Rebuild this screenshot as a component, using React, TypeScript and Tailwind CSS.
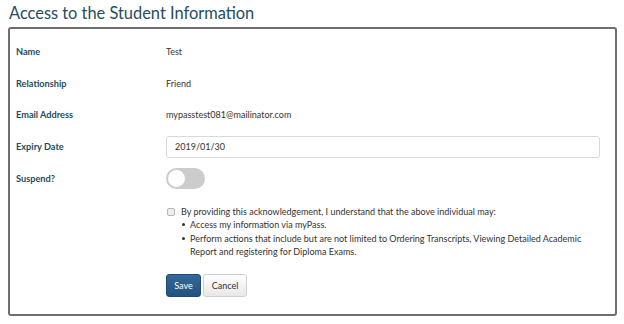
import React from "react";

const labelCls = "w-[150px] text-[9.2px] font-bold text-[#1f4c5e]";
const valCls = "text-[9px] text-[#333]";

function Bullet({ children }: { children: React.ReactNode }) {
  return (
    <div className="flex items-start">
      <div className="w-[9px] flex items-center h-[13.3px] pl-[1px]">
        <div className="w-[3px] h-[3px] rounded-full bg-[#333]" />
      </div>
      <div className="flex-1">{children}</div>
    </div>
  );
}

export default function App() {
  return (
    <div className="w-[624px] h-[324px] bg-white" style={{ fontFamily: "Lato, 'Open Sans', sans-serif" }}>
      <div className="pl-[9px] pt-[1px] h-[27px] text-[16.4px] leading-[24px] text-[#264d61]">Access to the Student Information</div>
      <div className="ml-[8px] w-[609px] h-[289px] border-2 border-[#6f6f6f] rounded-[3px] pl-[6px] pt-[7px]">
        <div className="flex items-center h-[32px]">
          <div className={labelCls}>Name</div>
          <div className={valCls}>Test</div>
        </div>
        <div className="flex items-center h-[31px]">
          <div className={labelCls}>Relationship</div>
          <div className={valCls}>Friend</div>
        </div>
        <div className="flex items-center h-[32px]">
          <div className={labelCls}>Email Address</div>
          <div className={valCls}>mypasstest081@mailinator.com</div>
        </div>
        <div className="flex items-center h-[32px]">
          <div className={labelCls}>Expiry Date</div>
          <div className="w-[434px] h-[22px] border border-[#d9d9d9] rounded-[3px] flex items-center pl-[8px] text-[9px] text-[#333]">2019/01/30</div>
        </div>
        <div className="flex items-center h-[31px]">
          <div className={labelCls}>Suspend?</div>
          <div className="w-[39px] h-[21px] rounded-full bg-[#cccccc] flex items-center pl-[2px]">
            <div className="w-[17px] h-[17px] rounded-full bg-white" />
          </div>
        </div>
        <div className="pl-[150px] pt-[11px] text-[9px] leading-[13.3px] text-[#333]">
          <div className="flex items-start">
            <div className="mt-[3px] ml-[1px] w-[8px] h-[8px] border border-[#b5b5b5] rounded-[2px] bg-[#eeeeee]" />
            <div className="ml-[6px]">
              <div>By providing this acknowledgement, I understand that the above individual may:</div>
              <Bullet>Access my information via myPass.</Bullet>
              <div className="w-[405px]">
                <Bullet>Perform actions that include but are not limited to Ordering Transcripts, Viewing Detailed Academic Report and registering for Diploma Exams.</Bullet>
              </div>
            </div>
          </div>
          <div className="flex gap-[2px] mt-[16px]">
            <button className="h-[23px] w-[35px] rounded-[3px] bg-gradient-to-b from-[#33689a] to-[#24527f] border border-[#1f4a73] text-white text-[9px]">Save</button>
            <button className="h-[23px] w-[44px] rounded-[3px] bg-gradient-to-b from-[#ffffff] to-[#e8e8e8] border border-[#cfcfcf] text-[#333] text-[9px]">Cancel</button>
          </div>
        </div>
      </div>
    </div>
  );
}
